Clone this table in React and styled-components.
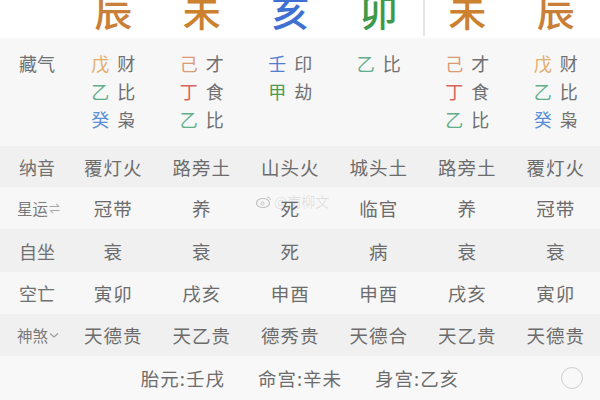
import styled, { createGlobalStyle } from 'styled-components'

const GlobalStyle = createGlobalStyle`
  html, body {
    margin: 0;
    padding: 0;
    background: #fff;
  }
  body {
    font-family: "Noto Sans CJK SC", "Noto Sans", sans-serif;
  }
`

const BRANCHES = [
  { ch: '辰', color: '#c97f38' },
  { ch: '未', color: '#cc812f' },
  { ch: '亥', color: '#3f70d2' },
  { ch: '卯', color: '#3e9a48', sep: true },
  { ch: '未', color: '#cc812f' },
  { ch: '辰', color: '#c97f38' },
]

const STEM_COLORS = {
  戊: '#e3ad6c',
  己: '#dc9a74',
  丁: '#d8645a',
  乙: '#62ae8a',
  癸: '#5b8fd6',
  壬: '#4f7fd0',
  甲: '#4c9c56',
}

const HIDDEN = [
  [['戊', '财'], ['乙', '比'], ['癸', '枭']],
  [['己', '才'], ['丁', '食'], ['乙', '比']],
  [['壬', '印'], ['甲', '劫']],
  [['乙', '比']],
  [['己', '才'], ['丁', '食'], ['乙', '比']],
  [['戊', '财'], ['乙', '比'], ['癸', '枭']],
]

const ROWS = [
  { label: '纳音', h: 41, values: ['覆灯火', '路旁土', '山头火', '城头土', '路旁土', '覆灯火'], shade: true },
  { label: '星运', h: 42, mark: '⇌', values: ['冠带', '养', '死', '临官', '养', '冠带'] },
  { label: '自坐', h: 43, values: ['衰', '衰', '死', '病', '衰', '衰'], shade: true },
  { label: '空亡', h: 42, values: ['寅卯', '戌亥', '申酉', '申酉', '戌亥', '寅卯'] },
  { label: '神煞', h: 42, mark: 'chev', values: ['天德贵', '天乙贵', '德秀贵', '天德合', '天乙贵', '天德贵'], shade: true },
]

const App = () => {
  return (
    <Page>
      <GlobalStyle />
      <TopRow>
        <span />
        {BRANCHES.map((b, i) => (
          <BranchCell key={i} $sep={b.sep}>
            <Branch $color={b.color}>{b.ch}</Branch>
          </BranchCell>
        ))}
      </TopRow>

      <HiddenRow>
        <Label>藏气</Label>
        {HIDDEN.map((col, i) => (
          <HiddenCell key={i}>
            {col.map(([stem, god], j) => (
              <Pair key={j}>
                <Stem $color={STEM_COLORS[stem]}>{stem}</Stem>
                <God>{god}</God>
              </Pair>
            ))}
          </HiddenCell>
        ))}
      </HiddenRow>

      {ROWS.map((row) => (
        <Row key={row.label} $shade={row.shade} $h={row.h}>
          {row.mark ? (
            <SmallLabel>
              {row.label}
              {row.mark === 'chev' ? (
                <svg width="10" height="8" viewBox="0 0 10 8">
                  <path d="M1 2.5 L5 6 L9 2.5" fill="none" stroke="#999" strokeWidth="1.1" />
                </svg>
              ) : (
                <Mark>{row.mark}</Mark>
              )}
            </SmallLabel>
          ) : (
            <Label>{row.label}</Label>
          )}
          {row.values.map((v, i) => (
            <Value key={i}>{v}</Value>
          ))}
        </Row>
      ))}

      <FooterRow>
        <FooterGroup>
          <Value>胎元:壬戌</Value>
          <Value>命宫:辛未</Value>
          <Value>身宫:乙亥</Value>
        </FooterGroup>
        <Circle />
      </FooterRow>

      <Watermark>
        <svg width="16" height="13" viewBox="0 0 16 13">
          <ellipse cx="7" cy="8" rx="6.5" ry="4.5" fill="none" stroke="#c4c4c4" strokeWidth="1.2" />
          <circle cx="6.5" cy="8.5" r="1.6" fill="none" stroke="#c4c4c4" strokeWidth="1" />
          <path d="M11 2 Q14 2 14.5 5" fill="none" stroke="#c4c4c4" strokeWidth="1" />
        </svg>
        <span>@南柳文</span>
      </Watermark>
    </Page>
  )
}

const Page = styled.div`
  position: relative;
  width: 600px;
  height: 400px;
  overflow: hidden;
  background: #fff;
`

const gridCols = `
  display: grid;
  grid-template-columns: 69px repeat(6, 1fr);
  align-items: center;
`

const TopRow = styled.div`
  ${gridCols}
  height: 38px;
  overflow: hidden;
  align-items: start;
`

const BranchCell = styled.div`
  display: flex;
  justify-content: center;
  height: 36px;
  border-right: ${(p) => (p.$sep ? '2px solid #e6e6e6' : 'none')};
  margin-right: ${(p) => (p.$sep ? '-2px' : '0')};
`

const Branch = styled.span`
  font-size: 38px;
  line-height: 38px;
  margin-top: -9px;
  font-weight: 500;
  color: ${(p) => p.$color};
`

const HiddenRow = styled.div`
  ${gridCols}
  align-items: start;
  height: 108px;
  box-sizing: border-box;
  padding-top: 11px;
  background: #f7f7f7;
`

const Label = styled.div`
  padding-left: 19px;
  font-size: 18px;
  line-height: 28px;
  color: #707070;
`

const SmallLabel = styled.div`
  display: flex;
  align-items: center;
  gap: 1px;
  padding-left: 17px;
  font-size: 15.5px;
  line-height: 28px;
  color: #7a7a7a;
`

const Mark = styled.span`
  font-size: 11px;
  color: #999;
`

const HiddenCell = styled.div`
  display: flex;
  flex-direction: column;
  align-items: center;
`

const Pair = styled.div`
  display: flex;
  gap: 8px;
  font-size: 18px;
  line-height: 28px;
`

const Stem = styled.span`
  color: ${(p) => p.$color};
`

const God = styled.span`
  color: #707070;
`

const Row = styled.div`
  ${gridCols}
  height: ${(p) => p.$h}px;
  background: ${(p) => (p.$shade ? '#f0f0f0' : '#f7f7f7')};
`

const Value = styled.div`
  text-align: center;
  font-size: 18.5px;
  letter-spacing: 1px;
  color: #6c6c6c;
`

const FooterRow = styled.div`
  position: relative;
  display: flex;
  justify-content: center;
  align-items: center;
  height: 44px;
  background: #f8f8f8;
`

const FooterGroup = styled.div`
  display: flex;
  gap: 33px;
`

const Circle = styled.div`
  position: absolute;
  right: 17px;
  top: 11px;
  width: 20px;
  height: 20px;
  border: 1.5px solid #cfcfcf;
  border-radius: 50%;
`

const Watermark = styled.div`
  position: absolute;
  left: 256px;
  top: 191px;
  display: flex;
  align-items: center;
  gap: 2px;
  font-size: 14px;
  color: rgba(0, 0, 0, 0.11);
  pointer-events: none;
`

export default App
